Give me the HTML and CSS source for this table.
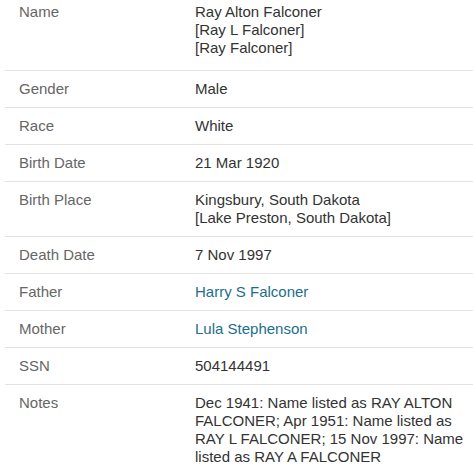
FILE: index.html
```html
<!DOCTYPE html>
<html>
<head>
<meta charset="utf-8">
<link rel="stylesheet" href="styles.css">
</head>
<body>
<div class="facts">
  <div class="row first">
    <div class="label">Name</div>
    <div class="value">Ray Alton Falconer<br>[Ray L Falconer]<br>[Ray Falconer]</div>
  </div>
  <div class="row">
    <div class="label">Gender</div>
    <div class="value">Male</div>
  </div>
  <div class="row">
    <div class="label">Race</div>
    <div class="value">White</div>
  </div>
  <div class="row">
    <div class="label">Birth Date</div>
    <div class="value">21 Mar 1920</div>
  </div>
  <div class="row">
    <div class="label">Birth Place</div>
    <div class="value">Kingsbury, South Dakota<br>[Lake Preston, South Dakota]</div>
  </div>
  <div class="row">
    <div class="label">Death Date</div>
    <div class="value">7 Nov 1997</div>
  </div>
  <div class="row">
    <div class="label">Father</div>
    <div class="value"><a class="link" href="#">Harry S Falconer</a></div>
  </div>
  <div class="row">
    <div class="label">Mother</div>
    <div class="value"><a class="link" href="#">Lula Stephenson</a></div>
  </div>
  <div class="row">
    <div class="label">SSN</div>
    <div class="value">504144491</div>
  </div>
  <div class="row last">
    <div class="label">Notes</div>
    <div class="value">Dec 1941: Name listed as RAY ALTON FALCONER; Apr 1951: Name listed as RAY L FALCONER; 15 Nov 1997: Name listed as RAY A FALCONER</div>
  </div>
</div>
</body>
</html>
```
FILE: styles.css
```css
html, body {
  margin: 0;
  padding: 0;
  background: #fff;
}
body {
  font-family: "Liberation Sans", Arial, sans-serif;
  font-size: 15px;
  line-height: 18px;
  color: #333;
}
.facts {
  padding-left: 5px;
  margin-top: -6px;
}
.row {
  display: grid;
  grid-template-columns: 190px 1fr;
  border-bottom: 1px solid #e3e3e3;
  padding: 9px 0;
}
.row.first {
  padding-bottom: 13px;
}
.row.last {
  border-bottom: none;
}
.label {
  padding-left: 14px;
  color: #666;
}
.value {
  padding-right: 0;
}
.link {
  color: #1d6e8c;
  text-decoration: none;
}
```
